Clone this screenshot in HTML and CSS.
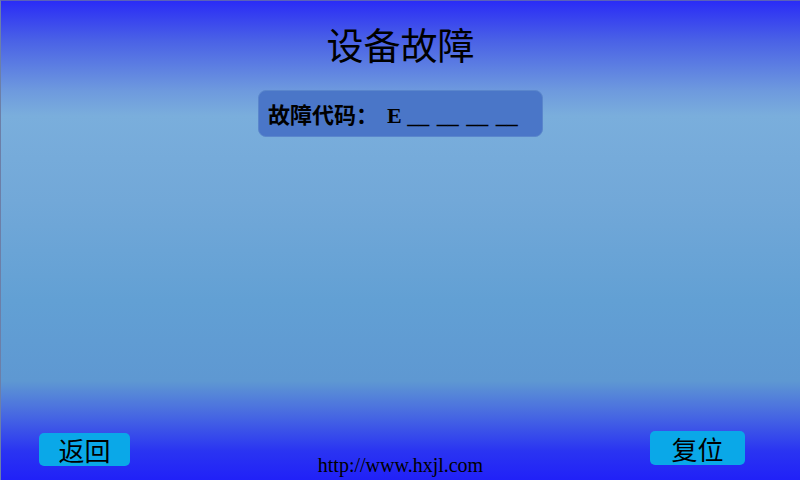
FILE: index.html
```html
<!DOCTYPE html>
<html lang="zh">
<head>
<meta charset="utf-8">
<title>设备故障</title>
<link rel="stylesheet" href="styles.css">
</head>
<body>
<div class="screen">
  <h1 class="title">设备故障</h1>
  <div class="code-box">故障代码：<span class="code">E <span class="blanks">__ __ __ __</span></span></div>
  <div class="spacer"></div>
  <div class="footer">
    <button class="btn btn-back">返回</button>
    <div class="url">http://www.hxjl.com</div>
    <button class="btn btn-reset">复位</button>
  </div>
</div>
</body>
</html>
```
FILE: styles.css
```css
html, body {
  margin: 0;
  padding: 0;
}
body {
  width: 800px;
  height: 480px;
  overflow: hidden;
  font-family: "Liberation Serif", "Noto Sans CJK SC", serif;
}
.screen {
  box-sizing: border-box;
  width: 800px;
  height: 480px;
  border-left: 1px solid #6c7fa8;
  border-top: 1px solid #5b61b8;
  display: flex;
  flex-direction: column;
  align-items: center;
  background: linear-gradient(to bottom,
    #2a2cf6 0px,
    #4a62e6 40px,
    #6e9ade 90px,
    #7aaedc 115px,
    #72a8d8 200px,
    #62a0d4 300px,
    #5e98d2 380px,
    #4a6ee0 410px,
    #2a34f2 450px,
    #2020f8 480px);
}
.title {
  margin: 20px 0 0;
  font-family: "Noto Sans CJK SC", sans-serif;
  font-weight: normal;
  font-size: 37px;
  line-height: 46px;
  color: #000;
}
.code-box {
  margin-top: 23px;
  box-sizing: border-box;
  width: 285px;
  height: 47px;
  padding: 5px 0 0 9px;
  border-radius: 8px;
  background: #4a76c8;
  border: 1px solid #5a86cc;
  font-family: "Liberation Serif", "Noto Sans CJK SC", serif;
  font-weight: bold;
  font-size: 22px;
  line-height: 40px;
  color: #000;
  white-space: pre;
}
.code {
  margin-left: 9px;
}
.blanks {
  word-spacing: 2px;
}
.spacer {
  flex: 1;
}
.footer {
  width: 100%;
  height: 49px;
  display: grid;
  grid-template-columns: 1fr auto 1fr;
  align-items: start;
}
.btn {
  border: none;
  border-radius: 5px;
  background: #0aa8e8;
  color: #000;
  font-family: "Noto Sans CJK SC", sans-serif;
  font-size: 26px;
  line-height: 33px;
  padding: 0;
}
.btn-back {
  justify-self: start;
  margin-left: 38px;
  margin-top: 2px;
  width: 91px;
  height: 33px;
}
.btn-reset {
  justify-self: end;
  margin-right: 55px;
  width: 95px;
  height: 34px;
}
.url {
  margin-top: 23px;
  font-family: "Liberation Serif", serif;
  font-size: 20px;
  line-height: 22px;
  color: #000;
}
```
